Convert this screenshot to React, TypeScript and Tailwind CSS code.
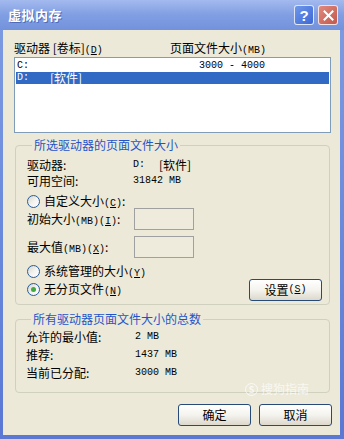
import React from "react";

const mono = "font-['Liberation_Mono',monospace] text-[10px] leading-[10px]";

function Mn({ c }: { c: string }) {
  return (
    <span className={mono}>
      (<span className="underline underline-offset-1">{c}</span>)
    </span>
  );
}

function Radio({ checked }: { checked?: boolean }) {
  return (
    <span className="w-[13px] h-[13px] rounded-full border border-[#2A5C94] bg-gradient-to-br from-[#D6D3C8] via-[#F3F2EE] to-white flex items-center justify-center shrink-0">
      {checked && <span className="w-[5px] h-[5px] rounded-full bg-[#3FAA3F]" />}
    </span>
  );
}

function XpButton({ children, className = "" }: { children: React.ReactNode; className?: string }) {
  return (
    <button
      className={
        "h-[22px] rounded-[3px] border border-[#274A78] bg-gradient-to-b from-white via-[#F4F3EE] to-[#DCD8CC] flex items-center justify-center text-[12px] leading-[14px] text-black " +
        className
      }
    >
      {children}
    </button>
  );
}

export default function App() {
  return (
    <div className="w-[344px] h-[439px] flex flex-col bg-gradient-to-b from-[#7E9CE2] to-[#5A78D4] font-['Noto_Sans_CJK_SC',sans-serif] text-[12px] leading-[14px] text-black overflow-hidden">
      {/* Title bar */}
      <div className="h-[30px] flex items-center pl-[8px] pr-[6px] bg-gradient-to-b from-[#A3BAEE] via-[#809EE2] to-[#7292DC] shrink-0">
        <span className="text-white font-bold text-[13px] leading-[16px] tracking-[0.5px] [text-shadow:1px_1px_0_#4E6CB8]">
          虚拟内存
        </span>
        <div className="ml-auto flex gap-[4px]">
          <div className="w-[20px] h-[20px] rounded-[3px] border border-white/80 bg-gradient-to-br from-[#6F97EA] to-[#3D68D6] flex items-center justify-center text-white font-bold text-[15px] leading-none font-['Liberation_Sans',sans-serif]">
            ?
          </div>
          <div className="w-[20px] h-[20px] rounded-[3px] border border-white/80 bg-gradient-to-br from-[#E08A7E] to-[#C2584C] flex items-center justify-center">
            <svg width="11" height="11" viewBox="0 0 11 11">
              <path d="M1.5 1.5 L9.5 9.5 M9.5 1.5 L1.5 9.5" stroke="white" strokeWidth="2" strokeLinecap="square" />
            </svg>
          </div>
        </div>
      </div>

      {/* Body */}
      <div className="relative flex-1 ml-[3px] mr-[4px] mb-[4px] bg-[#ECE9D8] flex flex-col pl-[11px] pr-[9px] pt-[11px]">
        <div className="flex h-[14px] items-center">
          <span className="w-[156px]">
            驱动器 [卷标]<Mn c="D" />
          </span>
          <span>
            页面文件大小<span className={mono}>(MB)</span>
          </span>
        </div>

        <div className="mt-[2px] h-[76px] border border-[#7F9DB9] bg-white pt-[2px] px-[1px]">
          <div className="h-[12px] flex items-center pl-[1px]">
            <span className={mono + " w-[182px]"}>C:</span>
            <span className={mono}>3000 - 4000</span>
          </div>
          <div className="h-[12px] flex items-center pl-[1px] bg-[#316AC5] text-white">
            <span className={mono + " w-[33px]"}>D:</span>
            <span className="leading-[12px]">[软件]</span>
          </div>
        </div>

        {/* Group 1 */}
        <fieldset className="mt-[5px] mx-[1px] border border-[#D0D0BF] rounded-[4px] pl-[11px] pr-[7px] pt-[6px] pb-[4px]">
          <legend className="ml-[5px] px-[2px] text-[#1F55C9] leading-[14px] h-[14px]">所选驱动器的页面文件大小</legend>
          <div className="flex flex-col">
            <div className="flex h-[14px] items-center">
              <span className="w-[106px]">驱动器:</span>
              <span className="flex items-center">
                <span className={mono}>D:</span>
                <span className="ml-[14px]">[软件]</span>
              </span>
            </div>
            <div className="flex h-[14px] items-center mt-[2px]">
              <span className="w-[106px]">可用空间:</span>
              <span className={mono}>31842 MB</span>
            </div>
            <div className="flex items-center h-[14px] mt-[6px] gap-[4px]">
              <Radio />
              <span>
                自定义大小<Mn c="C" />:
              </span>
            </div>
            <div className="flex items-center h-[22px]">
              <span className="w-[107px]">
                初始大小<span className={mono}>(MB)</span>
                <Mn c="I" />:
              </span>
              <span className="w-[60px] h-[22px] border border-[#A0A0A0] bg-[#EEEBDD]" />
            </div>
            <div className="flex items-center h-[22px] mt-[6px]">
              <span className="w-[107px]">
                最大值<span className={mono}>(MB)</span>
                <Mn c="X" />:
              </span>
              <span className="w-[60px] h-[22px] border border-[#A0A0A0] bg-[#EEEBDD]" />
            </div>
            <div className="flex items-center h-[14px] mt-[6px] gap-[4px]">
              <Radio />
              <span>
                系统管理的大小<Mn c="Y" />
              </span>
            </div>
            <div className="flex items-center justify-between h-[21px] mt-[1px]">
              <div className="flex items-center gap-[4px]">
                <Radio checked />
                <span>
                  无分页文件<Mn c="N" />
                </span>
              </div>
              <XpButton className="w-[73px] h-[21px]">
                设置<Mn c="S" />
              </XpButton>
            </div>
          </div>
        </fieldset>

        {/* Group 2 */}
        <fieldset className="mt-[7px] mx-[1px] border border-[#D0D0BF] rounded-[4px] pl-[10px] pr-[7px] pt-[4px] pb-[12px]">
          <legend className="ml-[5px] px-[2px] text-[#1F55C9] leading-[14px] h-[14px]">所有驱动器页面文件大小的总数</legend>
          <div className="flex flex-col gap-[4px]">
            <div className="flex h-[14px] items-center">
              <span className="w-[109px]">允许的最小值:</span>
              <span className={mono}>2 MB</span>
            </div>
            <div className="flex h-[14px] items-center">
              <span className="w-[109px]">推荐:</span>
              <span className={mono}>1437 MB</span>
            </div>
            <div className="flex h-[14px] items-center">
              <span className="w-[109px]">当前已分配:</span>
              <span className={mono}>3000 MB</span>
            </div>
          </div>
        </fieldset>

        <div className="mt-[11px] flex justify-end gap-[8px] -mr-[1px]">
          <XpButton className="w-[73px]">确定</XpButton>
          <XpButton className="w-[73px]">取消</XpButton>
        </div>

        <div className="absolute left-[242px] top-[352px] flex items-center gap-[3px] text-white/70 text-[12px] leading-[14px] pointer-events-none">
          <span className="w-[13px] h-[13px] rounded-full border border-white/70 flex items-center justify-center text-[9px] font-bold leading-none">S</span>
          <span>搜狗指南</span>
        </div>
      </div>
    </div>
  );
}
